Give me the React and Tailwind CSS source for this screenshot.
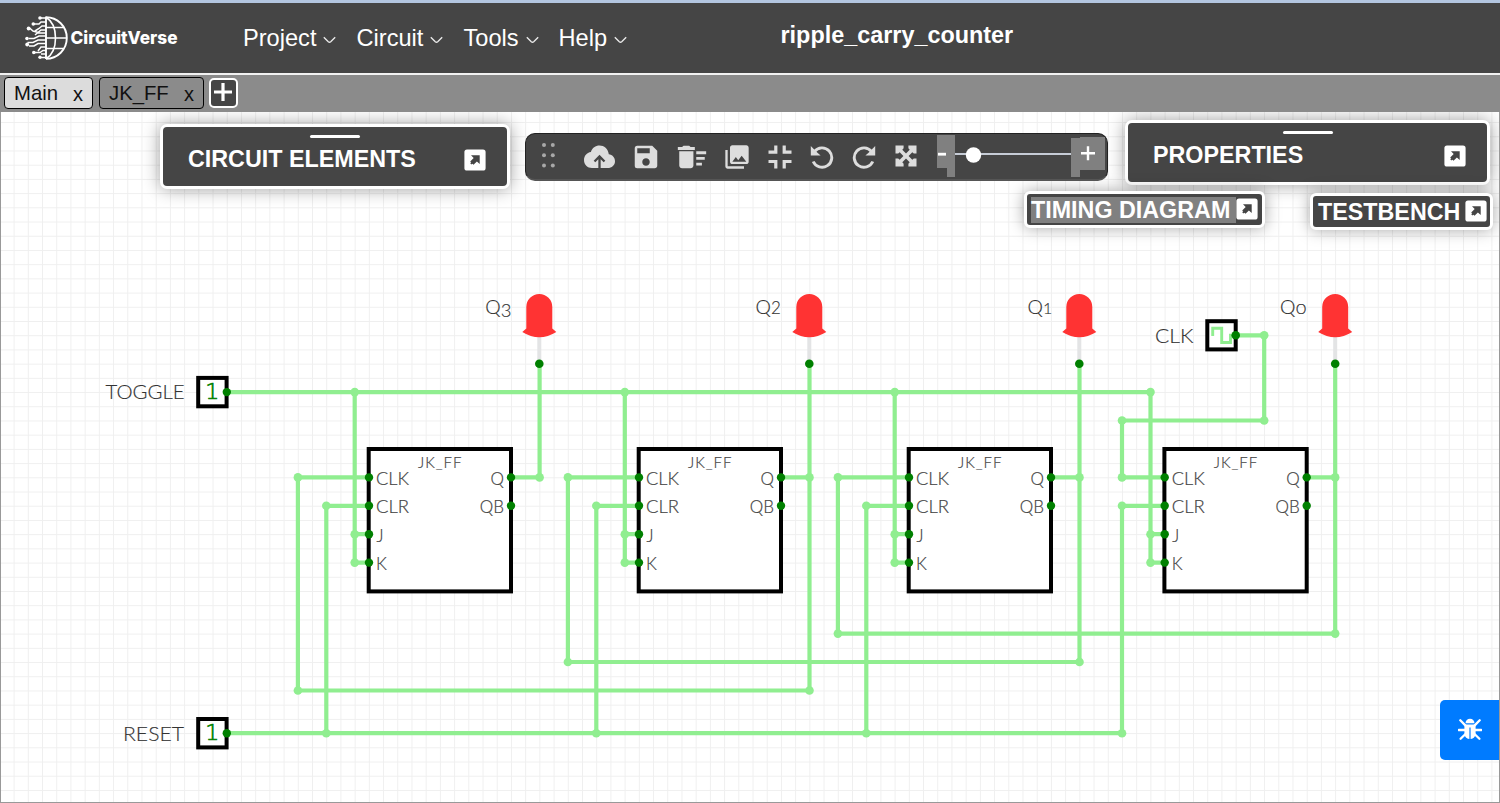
import React from "react";
import { MdSave, MdDeleteSweep, MdPhotoLibrary } from "react-icons/md";

const WIRE = "#90ee90";
const NODE = "#008000";

function Logo() {
  return (
    <svg className="ml-6 mt-[13px] shrink-0" width="156" height="48" viewBox="0 0 156 48">
      <g fill="none" stroke="#fff" strokeWidth="1.9">
        <path d="M22 3.6V46M22 4.2A20.8 20.8 0 0 1 22 45.8" />
        <path d="M22 4.2C30 9 31.5 18 31.5 25S30 41 22 45.8M22 14.5H39M22 25H43M22 35.5H39" strokeWidth="1.6" />
        <path d="M22 5H16M22 9H17L15 11H10M22 13H18L15 15.5L11 18M22 17H17L11 22M22 20H16L9 18L5 14.5M22 23H15L10 25.5H5M22 27H14L9 29.5H3.5M22 30.5H14L10 33H5M22 34H17L14 38M22 37.5H19L16 39.5H10M22 41H17M22 44.5H16" strokeWidth="1.5" />
      </g>
      <g fill="#fff">
        <circle cx="16" cy="5" r="1.8" />
        <circle cx="9.3" cy="11" r="1.8" />
        <circle cx="4.6" cy="15.5" r="1.9" />
        <circle cx="3" cy="25.5" r="1.8" />
        <circle cx="3.2" cy="31.5" r="1.9" />
        <circle cx="9.8" cy="39.5" r="1.8" />
        <circle cx="16" cy="44.3" r="1.7" />
        <text x="46.5" y="31" textLength="107" lengthAdjust="spacingAndGlyphs" className="font-['Inter',sans-serif] text-[17.5px] font-extrabold">
          CircuitVerse
        </text>
      </g>
    </svg>
  );
}

function Menu({ label, className }) {
  return (
    <div className={"flex shrink-0 items-center " + className}>
      <span className="text-[23.6px] leading-7">{label}</span>
      <svg className="ml-[7px] mt-[3px]" width="13" height="8" viewBox="0 0 13 8" fill="none" stroke="#e8e8e8" strokeWidth="1.4">
        <path d="M.8 1.2 5.3 5.8Q6.5 6.8 7.7 5.8L12.2 1.2" />
      </svg>
    </div>
  );
}

function Tab({ label, className }) {
  return (
    <div className={"flex h-8 items-center justify-between rounded border border-black pl-[9px] pr-[9px] text-[20.3px] leading-6 text-[#111] " + className}>
      <span>{label}</span>
      <span className="pt-px text-[20px]">x</span>
    </div>
  );
}

function PopOutIcon({ className }) {
  return (
    <svg className={"shrink-0 " + className} width="22" height="22" viewBox="0 0 22 22">
      <rect x=".4" y=".4" width="21.2" height="21.2" rx="2.6" fill="#fff" />
      <path d="M7 6.3H15.7V15L12.9 12.4 9.5 15.8 6.2 12.6 9.7 9.1Z" fill="#454545" />
      <path d="M9.3 12.6 6.9 14.9" stroke="#454545" strokeWidth="2" />
    </svg>
  );
}

function Panel({ title, className }) {
  return (
    <div className={"absolute flex items-start justify-between rounded-[7px] border-[3px] border-white bg-[#454545] pl-[25px] pr-[21px] pt-[18px] text-white shadow-[0_0_18px_rgba(0,0,0,0.38)] " + className}>
      <div className="absolute left-1/2 top-[8px] h-[3px] w-[50px] -translate-x-1/2 rounded bg-white" />
      <span className="whitespace-nowrap text-[23.3px] font-bold leading-7">{title}</span>
      <PopOutIcon className="mt-[4px]" />
    </div>
  );
}

function MiniPanel({ title, className, titleClass }) {
  return (
    <div className={"absolute flex items-center justify-between rounded-[6px] border-[3px] border-white bg-[#454545] text-white shadow-[0_0_16px_rgba(0,0,0,0.35)] " + className}>
      <span className={"whitespace-nowrap text-[23.3px] font-bold leading-[26px] " + titleClass}>{title}</span>
      <PopOutIcon className="-mt-px" />
    </div>
  );
}

function RotateIcon({ className }) {
  return (
    <svg className={"shrink-0 " + className} width="24" height="24" viewBox="0 0 24 24">
      <path d="M4.4 6.6A9.7 9.7 0 1 1 3.2 16.5" fill="none" stroke="#ddd" strokeWidth="2.9" />
      <path d="M.8 1V10.6H10.6L7.2 7.4Z" fill="#ddd" />
    </svg>
  );
}

function Toolbar() {
  return (
    <div className="absolute left-[525px] top-[21px] flex h-12 w-[583px] items-start rounded-[10px] border border-b-2 border-[#222] border-b-[#555] bg-[#454545] text-[#ddd]">
      <svg className="ml-[15px] mt-[8px] shrink-0" width="16" height="28" viewBox="0 0 16 28" fill="#a8a8a8">
        {[3, 13.2, 23.5].map((y) => (
          <g key={y}>
            <circle cx="3" cy={y} r="2" />
            <circle cx="11.8" cy={y} r="2" />
          </g>
        ))}
      </svg>
      <svg className="ml-[27px] mt-[11px] shrink-0" width="31" height="24" viewBox="0 0 31 24">
        <path d="M8 23H23.5C28 23 31 20 31 16.2 31 12.4 28.2 9.7 24.8 9.3 24 4 20.2.6 15.5.6 11.5.6 8.2 3 6.9 7 2.8 7.5 0 11 0 15 0 19.5 3.4 23 8 23Z" fill="#ddd" />
        <path d="M15.5 24V11.5M10.5 16.5 15.5 11.5 20.5 16.5" fill="none" stroke="#454545" strokeWidth="2.3" />
      </svg>
      <MdSave className="ml-4 mt-[8px] h-[30px] w-[30px] shrink-0" />
      <MdDeleteSweep className="ml-[14px] mt-[6px] h-[34px] w-[34px] shrink-0" />
      <MdPhotoLibrary className="ml-[14px] mt-[9px] h-7 w-7 shrink-0" />
      <svg className="ml-[17px] mt-[11px] shrink-0" width="24" height="24" viewBox="0 0 24 24" fill="none" stroke="#ddd" strokeWidth="3.2">
        <path d="M.5 7.2H7.8V.5M23.5 7.2H16.2V.5M.5 16.5H7.8V23.5M23.5 16.5H16.2V23.5" />
      </svg>
      <RotateIcon className="ml-[18px] mt-[11px]" />
      <RotateIcon className="ml-[18px] mt-[11px] -scale-x-100" />
      <svg className="ml-[19px] mt-[11px] shrink-0" width="22" height="22" viewBox="0 0 22 22" fill="#ddd">
        <path d="M.5.5H8.6V3.2L7.3 4.7 11 8.4 14.7 4.7 13.4 3.2V.5H21.5V8.6H18.8L17.3 7.3 13.6 11 17.3 14.7 18.8 13.4H21.5V21.5H13.4V18.8L14.7 17.3 11 13.6 7.3 17.3 8.6 18.8V21.5H.5V13.4H3.2L4.7 14.7 8.4 11 4.7 7.3 3.2 8.6H.5Z" />
      </svg>
      <svg className="ml-[20px] mt-px shrink-0" width="168" height="44" viewBox="0 0 168 44">
        <path d="M0 0H18V42H10V33H0Z" fill="#808080" />
        <path d="M134 3H143V2H168V35H143V42H134Z" fill="#808080" />
        <path d="M1 19.2H9" stroke="#fff" strokeWidth="2.8" />
        <path d="M144 18.3H158M151 11.3V25.3" stroke="#fff" strokeWidth="2.4" />
        <path d="M18 19H134" stroke="#c6ccd6" strokeWidth="2" />
        <circle cx="36.5" cy="20" r="7.7" fill="#fff" />
      </svg>
    </div>
  );
}

const WIRES = [
  "M227 392.1H1150.5V562.6H1164.7M1150.5 534.2H1164.7",
  "M354.7 392.1V562.6H369M354.7 534.2H369",
  "M624.8 392.1V562.6H639M624.8 534.2H639",
  "M894.7 392.1V562.6H909M894.7 534.2H909",
  "M511.2 477.4H539.6V363.7",
  "M781 477.4H809.5M809.5 363.7V690.5H297.9V477.4H369",
  "M1051 477.4H1079.5M1079.5 363.7V662H567.9V477.4H639",
  "M1306.8 477.4H1335.2M1335.2 363.7V633.6H837.9V477.4H909",
  "M227 733.2H1122V505.8H1164.7",
  "M326.3 733.2V505.8H369",
  "M596.3 733.2V505.8H639",
  "M866.3 733.2V505.8H909",
  "M1236 335.3H1264.2V420.5H1122V477.4H1164.7",
];

const JOINTS = [
  [354.7, 392.1], [354.7, 534.2], [354.7, 562.6],
  [624.8, 392.1], [624.8, 534.2], [624.8, 562.6],
  [894.7, 392.1], [894.7, 534.2], [894.7, 562.6],
  [1150.5, 392.1], [1150.5, 534.2], [1150.5, 562.6],
  [539.6, 477.4], [809.5, 477.4], [1079.5, 477.4], [1335.2, 477.4],
  [297.9, 477.4], [567.9, 477.4], [837.9, 477.4], [1122, 477.4],
  [326.3, 505.8], [596.3, 505.8], [866.3, 505.8], [1122, 505.8],
  [297.9, 690.5], [809.5, 690.5], [567.9, 662], [1079.5, 662],
  [837.9, 633.6], [1335.2, 633.6],
  [326.3, 733.2], [596.3, 733.2], [866.3, 733.2], [1122, 733.2],
  [1264.2, 335.3], [1264.2, 420.5], [1122, 420.5],
];

function FlipFlop({ x }) {
  return (
    <g transform={`translate(${x} 449)`}>
      <rect x="-.3" width="142.3" height="142.4" fill="#fff" stroke="#000" strokeWidth="4" />
      <g fill="#444" stroke="#444" strokeWidth=".2" className="text-[17px]">
        <text x="49" y="18.5" textLength="43.5" className="text-[15px]">JK_FF</text>
        <text x="7" y="35.5" textLength="33" lengthAdjust="spacingAndGlyphs">CLK</text>
        <text x="7" y="64" textLength="33" lengthAdjust="spacingAndGlyphs">CLR</text>
        <text x="7.5" y="92.5">J</text>
        <text x="7" y="120.5">K</text>
        <text x="135" y="35.5" textAnchor="end">Q</text>
        <text x="135" y="64" textAnchor="end">QB</text>
      </g>
      <circle cx="142" cy="56.8" r="4.2" fill={NODE} />
    </g>
  );
}

function Led({ x, digit, dy, digitClass, labelX }) {
  return (
    <g>
      <text x={labelX} y="314.2" fill="#333" stroke="#333" strokeWidth=".15" className="text-[19.5px]">
        Q<tspan dy={dy} className={digitClass}>{digit}</tspan>
      </text>
      <path d={`M${x} 334V360`} stroke="#e3e4e5" strokeWidth="4" />
      <path
        transform={`translate(${x} 0)`}
        d="M-13 307A13 13 0 0 1 13 307V328.5L17 332Q0 342.5 -17 332L-13 328.5Z"
        fill="#ff3333"
      />
      <circle cx={x} cy="363.7" r="4.3" fill={NODE} />
    </g>
  );
}

function Input({ y, label, x, width }) {
  return (
    <g>
      <text x={x} y={y + 7.3} textLength={width} lengthAdjust="spacingAndGlyphs" fill="#333" stroke="#333" strokeWidth=".15" className="text-[19.5px]">{label}</text>
      <rect x="198.2" y={y - 14.2} width="28.4" height="28.4" fill="#fff" stroke="#000" strokeWidth="4" />
      <text x="205.3" y={y + 7.2} fill={NODE} stroke={NODE} strokeWidth=".7" className="font-['DejaVu_Sans',sans-serif] text-[22px] font-extralight">1</text>
      <circle cx="226.8" cy={y} r="4.2" fill={NODE} />
    </g>
  );
}

function Circuit() {
  return (
    <svg className="block h-[691px] w-full font-['Lato',sans-serif] font-light" viewBox="0 112 1500 691">
      <defs>
        <pattern id="grid" x="-0.6" y="8.4" width="14.21" height="14.21" patternUnits="userSpaceOnUse">
          <path d="M0 .5H14.21M.5 0V14.21" stroke="#efefef" strokeWidth="1" />
        </pattern>
      </defs>
      <rect y="112" width="1500" height="691" fill="#fff" />
      <rect y="112" width="1500" height="691" fill="url(#grid)" />
      {[369, 639, 909, 1164.7].map((x) => (
        <FlipFlop key={x} x={x} />
      ))}
      <g fill="none" stroke={WIRE} strokeWidth="4.2">
        {WIRES.map((d) => (
          <path key={d} d={d} />
        ))}
      </g>
      <g fill={WIRE}>
        {JOINTS.map(([x, y]) => (
          <circle key={`${x}-${y}`} cx={x} cy={y} r="4.3" />
        ))}
      </g>
      <g fill={NODE}>
        {[369, 639, 909, 1164.7].map((x) => (
          <g key={x}>
            {[477.4, 505.8, 534.2, 562.6].map((y) => (
              <circle key={y} cx={x} cy={y} r="4.2" />
            ))}
            <circle cx={x + 142} cy="477.4" r="4.2" />
          </g>
        ))}
      </g>
      <Led x={539.3} labelX={485.3} digit="3" dy="3" digitClass="text-[18.5px]" />
      <Led x={809.3} labelX={755.5} digit="2" dy="0" digitClass="text-[17px]" />
      <Led x={1079.3} labelX={1027.5} digit="1" dy="0" digitClass="text-[16px]" />
      <Led x={1335.2} labelX={1280} digit="o" dy="0" digitClass="text-[20px]" />
      <Input y={392.1} label="TOGGLE" x={105.5} width={79} />
      <Input y={733.2} label="RESET" x={123} width={61} />
      <text x="1155" y="342.5" textLength="38.5" lengthAdjust="spacingAndGlyphs" fill="#333" stroke="#333" strokeWidth=".15" className="text-[19.5px]">CLK</text>
      <rect x="1207.3" y="321.2" width="28.4" height="28.2" fill="#fff" stroke="#000" strokeWidth="4" />
      <path d="M1212.7 336V328.2H1221.7V342.5H1230.5V335.3H1236" fill="none" stroke={WIRE} strokeWidth="2.9" />
      <circle cx="1235.7" cy="335.3" r="4.3" fill={NODE} />
    </svg>
  );
}

function BugIcon() {
  return (
    <svg className="mb-[2px] mr-px" width="24" height="24" viewBox="0 0 24 24">
      <path d="M7.5 6.2A4.5 4.5 0 0 1 16.5 6.2Z" fill="#fff" />
      <path d="M6.4 7.4H17.6V16.5A5.6 5.6 0 0 1 6.4 16.5Z" fill="#fff" />
      <path d="M2.3 3.3 7.3 8.4M21.7 3.3 16.7 8.4M.8 13H7M17 13H23.2M7.5 17 2.6 21.8M16.5 17 21.4 21.8" fill="none" stroke="#fff" strokeWidth="2.3" strokeLinecap="round" />
      <path d="M12 10.5V22" stroke="#007bff" strokeWidth="1.2" />
    </svg>
  );
}

export default function App() {
  return (
    <div className="relative flex h-[803px] w-[1500px] flex-col overflow-hidden bg-white font-['Liberation_Sans',Arial,sans-serif]">
      <header className="relative flex h-[73px] shrink-0 items-start border-t-[3px] border-[#b3c6e0] bg-[#454545] text-white">
        <div className="-mt-[3px] flex w-[243px] shrink-0">
          <Logo />
        </div>
        <nav className="flex pt-[21px]">
          <Menu label="Project" className="w-[113.5px]" />
          <Menu label="Circuit" className="w-[107px]" />
          <Menu label="Tools" className="w-[95px]" />
          <Menu label="Help" className="w-[90px]" />
        </nav>
        <h1 className="ml-[132px] pt-[18px] text-[23.4px] font-bold leading-7">ripple_carry_counter</h1>
      </header>
      <div className="flex h-[39px] shrink-0 items-start border-t-2 border-[#f2f2f2] bg-[#8b8b8b] pl-1 pt-[2px] text-black">
        <Tab label="Main" className="w-[89px] bg-[#dcdcdc]" />
        <Tab label="JK_FF" className="ml-[6px] w-[105px] bg-[#8b8b8b]" />
        <div className="ml-[5px] mt-px flex h-[30px] w-[29px] items-center justify-center rounded-[5px] border-2 border-white bg-[#454545]">
          <svg className="-mt-[2px] mr-[2px]" width="18" height="18" viewBox="0 0 18 18" stroke="#fff" strokeWidth="3.2">
            <path d="M0 9H18M9 0V18" />
          </svg>
        </div>
      </div>
      <main className="relative h-[691px] shrink-0 overflow-hidden">
        <Circuit />
        <Panel title="CIRCUIT ELEMENTS" className="left-[160px] top-[12px] h-[65px] w-[350px]" />
        <Panel title="PROPERTIES" className="left-[1125px] top-[8px] h-[65px] w-[365px]" />
        <MiniPanel title="TIMING DIAGRAM" className="left-[1024px] top-[79px] h-[37px] w-[241px] pl-1 pr-[4px]" titleClass="w-[206px] bg-[#808080]" />
        <MiniPanel title="TESTBENCH" className="left-[1310px] top-[81px] h-[37px] w-[183px] pl-[5px] pr-[3px]" titleClass="" />
        <Toolbar />
        <button className="absolute right-0 top-[588px] flex h-[60px] w-[60px] items-center justify-center rounded-l-[5px] bg-[#007bff] text-white">
          <BugIcon />
        </button>
      </main>
      <div className="pointer-events-none absolute inset-x-0 bottom-0 top-[112px] border-x border-b border-[#999]" />
    </div>
  );
}
